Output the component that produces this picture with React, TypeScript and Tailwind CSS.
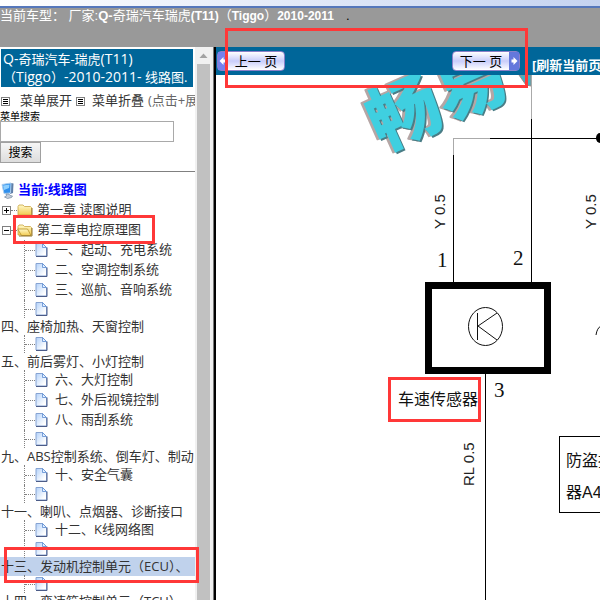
import type { ReactNode } from "react";

type TreeRow = { kind: "item" | "blank" | "wrap"; text?: string; active?: boolean };

const rows: TreeRow[] = [
  { kind: "item", text: "一、起动、充电系统" },
  { kind: "item", text: "二、空调控制系统" },
  { kind: "item", text: "三、巡航、音响系统" },
  { kind: "blank" },
  { kind: "wrap", text: "四、座椅加热、天窗控制" },
  { kind: "blank" },
  { kind: "wrap", text: "五、前后雾灯、小灯控制" },
  { kind: "item", text: "六、大灯控制" },
  { kind: "item", text: "七、外后视镜控制" },
  { kind: "item", text: "八、雨刮系统" },
  { kind: "blank" },
  { kind: "wrap", text: "九、ABS控制系统、倒车灯、制动" },
  { kind: "item", text: "十、安全气囊" },
  { kind: "blank" },
  { kind: "wrap", text: "十一、喇叭、点烟器、诊断接口" },
  { kind: "item", text: "十二、K线网络图" },
  { kind: "blank" },
  { kind: "wrap", text: "十三、发动机控制单元（ECU）、", active: true },
  { kind: "blank" },
  { kind: "wrap", text: "十四、变速箱控制单元（TCU）" },
];

const PageIcon = () => (
  <svg width="13" height="14" viewBox="0 0 13 14" className="shrink-0">
    <defs>
      <linearGradient id="paper" x1="0" y1="0" x2="1" y2="1">
        <stop offset="0" stopColor="#b4d2fa" />
        <stop offset="0.8" stopColor="#ffffff" />
      </linearGradient>
    </defs>
    <path d="M1 .5h6.500l4 4v8.500H1z" fill="url(#paper)" stroke="#86a3d2" />
    <path d="M12 4.500v9H1" fill="none" stroke="#4c5c88" />
    <path d="M7.500 .5v4h4z" fill="#e3efff" stroke="#5b8bd0" strokeWidth="0.8" />
  </svg>
);

const FolderIcon = ({ open = false }: { open?: boolean }) => (
  <svg width="16" height="14" viewBox="0 0 16 14" className="shrink-0">
    <defs>
      <linearGradient id="folder" x1="0" y1="0" x2="0" y2="1">
        <stop offset="0" stopColor="#fff9c8" />
        <stop offset="1" stopColor="#f2cb52" />
      </linearGradient>
    </defs>
    <path d="M1 12V3.500L2 2h4l1.500 1.500h6l1 1V12z" fill="url(#folder)" stroke="#c9a544" strokeWidth="0.8" />
    {open && <path d="M.7 6h9.800l3.500 6.500H4.500z" fill="url(#folder)" stroke="#b8922c" strokeWidth="0.8" />}
    <path d="M2 13h13V5" fill="none" stroke="#94762c" />
  </svg>
);

const ComputerIcon = () => (
  <svg width="15" height="17" viewBox="0 0 15 17" className="shrink-0">
    <path d="M10 1l2.500.5L12 11l-3 1z" fill="#5f7fa8" />
    <path d="M1 2.500L10 1l-.5 10L3 11.500z" fill="#2f8fec" stroke="#a9cdef" />
    <path d="M2 3.500l6.500-1L8 6 3 8z" fill="#8fd0ff" />
    <path d="M5 12h3l1 1.500 2.500.5-1 1.500-4 1-3-1.500 2-1z" fill="#c3cdda" stroke="#73879f" strokeWidth="0.7" />
  </svg>
);

const BoxIcon = ({ open = false }: { open?: boolean }) => (
  <svg width="9" height="9" viewBox="0 0 9 9" className="shrink-0" shapeRendering="crispEdges">
    <path d="M.5.5h8v8h-8z" fill="#fff" stroke="#808080" />
    <path d={open ? "M2 4.500h5" : "M2 4.500h5M4.500 2v5"} stroke="#000" />
  </svg>
);

const ListIcon = () => (
  <svg width="9" height="9" viewBox="0 0 9 9" className="shrink-0" shapeRendering="crispEdges">
    <path d="M.5.5h8v8h-8z" fill="#fff" stroke="#808080" />
    <path d="M2 2.500h5M2 4.500h5M2 6.500h5" stroke="#000" />
  </svg>
);

const Branch = ({ children }: { children?: ReactNode }) => (
  <>
    <span className="ml-6 w-px self-stretch border-l border-dotted border-[#808080]" />
    <span className="w-2.5 border-t border-dotted border-[#808080]" />
    <PageIcon />
    {children}
  </>
);

const TreeLine = ({ row }: { row: TreeRow }) => {
  if (row.kind === "wrap") {
    return (
      <li className={`-my-px h-[19px] leading-[19px] pl-px ${row.active ? "bg-[#c0d2ec]" : ""}`}>
        <a href="#">{row.text}</a>
      </li>
    );
  }
  if (row.kind === "blank") {
    return (
      <li className="flex h-[18px] items-center">
        <Branch />
      </li>
    );
  }
  return (
    <li className="flex h-5 items-center">
      <Branch>
        <a href="#" className="ml-[7px]">{row.text}</a>
      </Branch>
    </li>
  );
};

const Sidebar = () => (
  <aside className="w-[195px] shrink-0 overflow-hidden whitespace-nowrap bg-white text-[13px] text-[#333]">
    <h1 className="mx-px mt-0.5 h-[38px] w-48 bg-[#006699] px-0.5 py-px leading-[17px] text-white">
      <span className="text-sm leading-[17px]">Q-</span>奇瑞汽车-瑞虎<span className="text-sm leading-[17px]">(T11)</span>
      <br />
      （<span className="text-sm leading-[17px]">Tiggo</span>）<span className="text-sm leading-[17px]">-2010-2011- </span>线路图.
    </h1>
    <div className="mt-1 flex h-5 items-center pl-px">
      <ListIcon />
      <a href="#" className="ml-2.5 shrink-0">菜单展开</a>
      <span className="w-1 shrink-0" />
      <ListIcon />
      <a href="#" className="ml-[7px] shrink-0">菜单折叠</a>
      <span className="ml-1 text-[#666]">(点击+展</span>
    </div>
    <form onSubmit={(e) => e.preventDefault()}>
      <label htmlFor="menu-search" className="block h-2.5 text-[10px] leading-[10px] text-black">菜单搜索</label>
      <input id="menu-search" className="block h-[21px] w-[174px] border border-[#a9a9a9] bg-white px-1" />
      <button className="block h-[21px] w-[41px] border border-[#a0a0a0] bg-linear-to-b from-[#f6f6f6] to-[#dddddd] text-[12px] leading-none text-black">搜索</button>
    </form>
    <hr className="mt-2 border-[#808080]" />
    <ul className="mt-2">
      <li className="flex h-5 items-center pl-px">
        <ComputerIcon />
        <a href="#" className="ml-0.5 font-bold text-[#0000ff]">当前:线路图</a>
      </li>
      <li className="flex h-5 items-center pl-0.5">
        <BoxIcon />
        <span className="w-1.5 border-t border-dotted border-[#808080]" />
        <FolderIcon />
        <a href="#" className="ml-1">第一章 读图说明</a>
      </li>
      <li className="flex h-5 items-center pl-0.5">
        <BoxIcon open />
        <span className="w-1.5 border-t border-dotted border-[#808080]" />
        <FolderIcon open />
        <a href="#" className="ml-1">第二章电控原理图</a>
      </li>
      {rows.map((row, index) => (
        <TreeLine key={index} row={row} />
      ))}
    </ul>
  </aside>
);

const ScrollBar = () => (
  <div className="flex w-4 shrink-0 flex-col items-center bg-[#f1f1f1]">
    <svg width="16" height="17" viewBox="0 0 16 17" className="shrink-0">
      <path d="M4.500 11L8.500 6.500L12.500 11z" fill="#a3a3a3" />
    </svg>
    <div className="w-[13px] flex-1 bg-[#c1c1c1]" />
  </div>
);

const Diagram = () => (
  <svg width="384" height="525" className="block" fontFamily="'Liberation Sans', 'Noto Sans CJK SC', sans-serif">
    <defs>
      <clipPath id="mark">
        <path d="M0 0h315v120H0z" />
      </clipPath>
    </defs>
    <g clipPath="url(#mark)" fontFamily="'Noto Sans CJK SC', sans-serif" fontSize="72" fontWeight="900" strokeLinejoin="round">
      <g transform="rotate(-24 190 37)">
        <text x="150" y="62" fill="#b5a6a5" stroke="#b5a6a5" strokeWidth="2">畅易</text>
        <text x="153" y="65" fill="#4a7d86">畅易</text>
        <text x="152" y="63" fill="#3fcfe0">畅易</text>
      </g>
      <path d="M303 0h12v11l-5-1z" fill="#3fb4c4" stroke="#9a8988" />
    </g>
    <g fill="none" stroke="#000" shapeRendering="crispEdges">
      <path d="M315.500 0v44M237.500 80V63.500H274" stroke="#aaa" />
      <path d="M315.500 44v164M237.500 80v128M274 63.500H384M269.500 299v226" />
      <path d="M212.500 210.500h119v85h-119z" strokeWidth="7" />
      <path d="M343.500 361.500h60v76h-60z" />
    </g>
    <g fill="none" stroke="#111">
      <ellipse cx="269.500" cy="251.500" rx="17" ry="19" />
      <path d="M261.500 238v27M281 238l-19 13 19 14" />
      <path d="M380 260q1-7 5-9" />
    </g>
    <ellipse cx="384" cy="63" rx="4" ry="5" />
    <g fontSize="15" fill="#222">
      <text transform="translate(229 154) rotate(-90)">Y 0.5</text>
      <text transform="translate(380 154) rotate(-90)">Y 0.5</text>
      <text transform="translate(258 411) rotate(-90)">RL 0.5</text>
    </g>
    <g fontSize="21" fontFamily="'Liberation Serif', serif" fill="#111">
      <text x="221" y="192">1</text>
      <text x="297" y="190">2</text>
      <text x="278" y="322">3</text>
    </g>
    <g fontSize="16" fill="#111">
      <text x="182" y="330">车速传感器</text>
      <text x="350" y="391">防盗控</text>
      <text x="350" y="423">器A4</text>
    </g>
  </svg>
);

const App = () => (
  <div className="relative flex h-screen flex-col overflow-hidden bg-white font-['Open_Sans','Noto_Sans_CJK_SC',sans-serif]">
    <div className="h-2 shrink-0 border-b-2 border-[#5577bb] bg-linear-to-r from-white to-[#c5d3f0]" />
    <header className="h-[39px] shrink-0 overflow-hidden whitespace-pre bg-[#999999] font-['Liberation_Sans','Noto_Sans_CJK_SC',sans-serif] text-[13px] leading-4 text-white">
      当前车型： 厂家:<b>Q-</b>奇瑞汽车瑞虎<b className="text-xs">(T11)</b>（<b className="text-xs">Tiggo</b>）<b className="text-xs">2010-2011</b>
      <span className="ml-3 text-black">.</span>
    </header>
    <div className="flex min-h-0 flex-1">
      <Sidebar />
      <ScrollBar />
      <div className="w-[5px] shrink-0 border-x-2 border-l-[#eeeeee] border-r-black bg-[#777]" />
      <main className="min-w-0 flex-1 overflow-hidden">
        <nav className="flex h-7 items-center overflow-hidden whitespace-nowrap bg-[#006699] pl-px text-[13px]">
          <button className="flex h-5 w-[68px] shrink-0 items-center rounded-sm border border-[#8b80c8] bg-linear-to-b from-white via-[#c9cdfa] to-white text-black">
            <svg width="10" height="18" viewBox="0 0 10 18"><path d="M0 0h10v18H0z" fill="#7780ee" /><path d="M1.500 9l4-4v2.500h2v3h-2V13z" fill="#fff" /></svg>
            <span className="flex-1 text-center leading-none">上一 页</span>
          </button>
          <button className="ml-[167px] flex h-5 w-[68px] shrink-0 items-center rounded-sm border border-[#8b80c8] bg-linear-to-b from-white via-[#c9cdfa] to-white text-black">
            <span className="flex-1 text-center leading-none">下一 页</span>
            <svg width="10" height="18" viewBox="0 0 10 18"><path d="M0 0h10v18H0z" fill="#6478dc" /><path d="M8.500 9l-4-4v2.500h-2v3h2V13z" fill="#fff" /></svg>
          </button>
          <a href="#" className="ml-3 pt-2.5 font-bold text-white">[刷新当前页]</a>
        </nav>
        <Diagram />
      </main>
    </div>
    <div className="pointer-events-none absolute left-[225px] top-7 h-[60px] w-[303px] border-3 border-[#ff3838]" />
    <div className="pointer-events-none absolute left-[13px] top-[215px] h-[29px] w-[142px] border-3 border-[#ff3838]" />
    <div className="pointer-events-none absolute left-1 top-[547px] h-9 w-[195px] border-3 border-[#ff3838]" />
    <div className="pointer-events-none absolute left-[388px] top-[377px] h-[45px] w-[93px] border-3 border-[#ff3838]" />
  </div>
);

export default App;
